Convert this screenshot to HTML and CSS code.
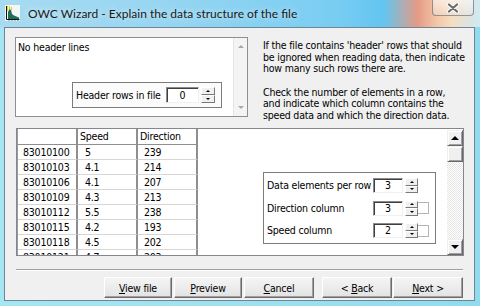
FILE: index.html
```html
<!DOCTYPE html>
<html>
<head>
<meta charset="utf-8">
<title>OWC Wizard</title>
<link rel="stylesheet" href="styles.css">
</head>
<body>
<div class="window">
  <div class="titlebar">
    <svg class="app-icon" width="15" height="16" viewBox="0 0 15 16">
      <rect x="0" y="0" width="15" height="16" fill="#f4f8f4"/>
      <path d="M3 14 L3 7 L4.5 4 L6 5 L7 9 L9 10.5 L11.5 11.5 L14 12.5 L14 14 Z" fill="#1f6e5c"/>
      <path d="M2.5 1 V6 M4.5 1 V4 M6.5 2 V5" stroke="#e8d21c" stroke-width="1.2"/>
      <path d="M1.5 1 V14.5 H14.5" stroke="#111" stroke-width="1" fill="none"/>
      <path d="M4 15.5 V14.5 M7 15.5 V14.5 M10 15.5 V14.5 M13 15.5 V14.5" stroke="#111" stroke-width="1"/>
    </svg>
    <span class="title">OWC Wizard - Explain the data structure of the file</span>
    <div class="close">
      <svg width="12" height="10" viewBox="0 0 12 10">
        <path d="M2 1.5 L10 8.5 M10 1.5 L2 8.5" stroke="#ffffff" stroke-width="4" stroke-linecap="round"/>
        <path d="M2 1.5 L10 8.5 M10 1.5 L2 8.5" stroke="#6a6a6a" stroke-width="2.2" stroke-linecap="round"/>
      </svg>
    </div>
  </div>
  <div class="client">
    <div class="top">
      <div class="listbox">
        <div class="list-text">No header lines</div>
        <div class="vscroll-light">
          <span class="dis-arrow dis-up"></span>
          <span class="dis-arrow dis-down"></span>
        </div>
        <div class="group header-group">
          <span class="label">Header rows in file</span>
          <div class="edit edit-wide">0</div>
          <div class="spin"><span class="spin-btn"><i class="tri tri-up"></i></span><span class="spin-btn"><i class="tri tri-down"></i></span></div>
        </div>
      </div>
      <div class="help">
        <p>If the file contains 'header' rows that should<br>be ignored when reading data, then indicate<br>how many such rows there are.</p>
        <p>Check the number of elements in a row,<br>and indicate which column contains the<br>speed data and which the direction data.</p>
      </div>
    </div>

    <div class="data-panel">
      <div class="grid-area">
        <div class="grid">
          <div class="cell hdr c1"></div><div class="cell hdr c2">Speed</div><div class="cell hdr c3">Direction</div>
          <div class="cell c1">83010100</div><div class="cell c2">5</div><div class="cell c3">239</div>
          <div class="cell c1">83010103</div><div class="cell c2">4.1</div><div class="cell c3">214</div>
          <div class="cell c1">83010106</div><div class="cell c2">4.1</div><div class="cell c3">207</div>
          <div class="cell c1">83010109</div><div class="cell c2">4.3</div><div class="cell c3">213</div>
          <div class="cell c1">83010112</div><div class="cell c2">5.5</div><div class="cell c3">238</div>
          <div class="cell c1">83010115</div><div class="cell c2">4.2</div><div class="cell c3">193</div>
          <div class="cell c1">83010118</div><div class="cell c2">4.5</div><div class="cell c3">202</div>
          <div class="cell c1 last">83010121</div><div class="cell c2 last">4.7</div><div class="cell c3 last">203</div>
        </div>
      </div>
      <div class="vscroll">
        <span class="sb-btn"><i class="sb-tri sb-up"></i></span>
        <span class="sb-thumb"></span>
        <span class="sb-track"></span>
        <span class="sb-btn"><i class="sb-tri sb-down"></i></span>
      </div>
      <div class="group fields">
        <span class="label">Data elements per row</span>
        <div class="edit">3</div>
        <div class="spin"><span class="spin-btn"><i class="tri tri-up"></i></span><span class="spin-btn"><i class="tri tri-down"></i></span></div>
        <span class="stub none"></span>

        <span class="label">Direction column</span>
        <div class="edit">3</div>
        <div class="spin"><span class="spin-btn"><i class="tri tri-up"></i></span><span class="spin-btn"><i class="tri tri-down"></i></span></div>
        <span class="stub"></span>

        <span class="label">Speed column</span>
        <div class="edit">2</div>
        <div class="spin"><span class="spin-btn"><i class="tri tri-up"></i></span><span class="spin-btn"><i class="tri tri-down"></i></span></div>
        <span class="stub"></span>
      </div>
    </div>

    <div class="separator"></div>

    <div class="buttons">
      <button class="btn b-view"><u>V</u>iew file</button>
      <button class="btn b-preview"><u>P</u>review</button>
      <button class="btn b-cancel"><u>C</u>ancel</button>
      <button class="btn b-back">&lt; <u>B</u>ack</button>
      <button class="btn b-next"><u>N</u>ext &gt;</button>
    </div>
  </div>
</div>
</body>
</html>
```

FILE: styles.css
```css
* { box-sizing: border-box; }
html, body { margin: 0; padding: 0; }
body {
  width: 480px;
  height: 306px;
  overflow: hidden;
  font-family: "DejaVu Sans Condensed", "DejaVu Sans", "Liberation Sans", sans-serif;
  font-stretch: condensed;
  font-size: 10.5px;
  letter-spacing: -0.2px;
  color: #000;
}

.window {
  width: 480px;
  height: 306px;
  display: flex;
  flex-direction: column;
  background: linear-gradient(90deg, #a6e6f3 0%, #9fe0f0 50%, #8fdcef 100%);
}

.titlebar {
  height: 27px;
  flex: none;
  display: flex;
  align-items: center;
  padding-left: 5px;
  background: linear-gradient(90deg, #a7dbf1 0%, #96d5f1 35%, #79cdf2 70%, #62c5f0 80%, #e59a85 87%, #f2c7a8 91%, #f6dcc0 94%, #cfe9f3 100%);
}

.app-icon { flex: none; margin-right: 8px; margin-top: -1px; }

.title {
  font-family: Lato, "Liberation Sans", sans-serif;
  font-stretch: normal;
  font-size: 12px;
  letter-spacing: 0;
  color: #1a1a1a;
  text-shadow: 0 0 6px rgba(255,255,255,0.8);
  margin-top: -1px;
  white-space: nowrap;
}

.close {
  margin-left: auto;
  margin-right: 6px;
  align-self: flex-start;
  width: 42px;
  height: 16px;
  border: 1px solid rgba(70,70,90,0.55);
  border-top: none;
  border-radius: 0 0 4px 4px;
  background: linear-gradient(180deg, rgba(255,255,255,0.55), rgba(240,230,220,0.35));
  display: flex;
  align-items: center;
  justify-content: center;
}

.client {
  flex: 1;
  margin: 0 5px 5px 4px;
  border: 1px solid #6d8594;
  background: #f0f0f0;
  padding: 9px 10px 0 10px;
  display: flex;
  flex-direction: column;
}

/* top section */
.top { display: flex; height: 80px; flex: none; }

.listbox {
  position: relative;
  flex: none;
  width: 233px;
  height: 80px;
  border: 1px solid #8e8f8f;
  background: #fff;
  display: flex;
}
.list-text { flex: 1; padding: 3px 0 0 2px; white-space: nowrap; }

.vscroll-light {
  width: 14px;
  border-left: 1px solid #e6e6e6;
  background: #f4f4f4;
  display: flex;
  flex-direction: column;
  justify-content: space-between;
  align-items: center;
  padding: 7px 0 7px 0;
}
.dis-arrow { width: 0; height: 0; border-left: 3px solid transparent; border-right: 3px solid transparent; }
.dis-up { border-bottom: 3px solid #a8a8a8; }
.dis-down { border-top: 3px solid #a8a8a8; }

.group {
  position: absolute;
  border: 1px solid #7c7c7c;
  background: #fbfbfb;
}
.label { white-space: nowrap; }
.header-group {
  left: 56px;
  top: 44px;
  width: 150px;
  height: 26px;
  display: flex;
  align-items: center;
  padding-left: 3px;
}
.header-group .label { width: 90px; }

.edit {
  width: 30px;
  height: 15px;
  background: #fff;
  border: 1px solid;
  border-color: #8a8a8a #f0f0f0 #f0f0f0 #8a8a8a;
  box-shadow: inset 1px 1px 0 #3f3f3f;
  text-align: center;
  line-height: 13px;
}
.edit-wide { width: 33px; height: 16px; line-height: 14px; }

.spin {
  width: 13px;
  height: 15px;
  margin-left: 2px;
  display: flex;
  flex-direction: column;
}
.header-group .spin { width: 14px; height: 16px; }
.spin-btn {
  flex: 1;
  background: #f0f0f0;
  border: 1px solid;
  border-color: #fff #7a7a7a #7a7a7a #fff;
  display: flex;
  align-items: center;
  justify-content: center;
}
.tri { width: 0; height: 0; border-left: 2px solid transparent; border-right: 2px solid transparent; }
.tri-up { border-bottom: 2px solid #000; }
.tri-down { border-top: 2px solid #000; }

.help { margin-left: 15px; padding-top: 3px; line-height: 11.5px; white-space: nowrap; }
.help p { margin: 0; }
.help p + p { margin-top: 12px; }

/* data panel */
.data-panel {
  position: relative;
  margin-top: 11px;
  margin-left: 1px;
  width: 448px;
  height: 128px;
  flex: none;
  border: 1px solid #828790;
  background: #fff;
  display: flex;
}
.grid-area { flex: 1; overflow: hidden; }
.grid {
  display: grid;
  grid-template-columns: 60px 60px 60px;
  grid-template-rows: 16px repeat(7, 15px) 40px;
  width: 181px;
  border-left: 1px solid #9a9a9a;
}
.cell {
  border-right: 2px solid #8f8f8f;
  border-bottom: 1px solid #d6d6d6;
  white-space: nowrap;
  line-height: 14px;
}
.cell.hdr { border-bottom: 1px solid #8f8f8f; line-height: 15px; padding-left: 2px; }
.c1 { padding-left: 5px; }
.c2 { padding-left: 7px; }
.c3 { padding-left: 6px; }
.cell.last { border-bottom: none; }

.vscroll {
  width: 16px;
  flex: none;
  display: flex;
  flex-direction: column;
  padding-top: 1px;
}
.sb-btn, .sb-thumb {
  height: 16px;
  flex: none;
  background: #f0f0f0;
  border: 1px solid;
  border-color: #f0f0f0 #696969 #696969 #f0f0f0;
  box-shadow: inset 1px 1px 0 #fff, inset -1px -1px 0 #a0a0a0;
  display: flex;
  align-items: center;
  justify-content: center;
}
.sb-track {
  flex: 1;
  background: repeating-conic-gradient(#e6e6e6 0 25%, #ffffff 0 50%) 0 0 / 2px 2px;
}
.sb-tri { width: 0; height: 0; border-left: 4px solid transparent; border-right: 4px solid transparent; }
.sb-up { border-bottom: 4px solid #000; }
.sb-down { border-top: 4px solid #000; }

.fields {
  left: 246px;
  top: 43px;
  width: 173px;
  height: 72px;
  background: #fff;
  display: grid;
  grid-template-columns: 106px 30px 15px 11px;
  grid-auto-rows: 15px;
  row-gap: 7.5px;
  align-items: center;
  padding: 5px 0 0 3px;
}
.fields .label { line-height: 15px; }
.fields .spin { margin-left: 2px; }
.stub {
  height: 12px;
  border: 1px solid #b5b5b5;
  border-left: none;
  background: #fff;
}
.stub.none { border: none; }

.separator {
  margin-top: 13px;
  margin-left: 1px;
  width: 447px;
  height: 2px;
  border-top: 1px solid #a0a0a0;
  border-bottom: 1px solid #fff;
  flex: none;
}

.buttons {
  margin-top: 6px;
  display: flex;
  justify-content: flex-end;
  padding-right: 1px;
}
.btn {
  height: 21px;
  width: 70px;
  font-family: inherit;
  font-stretch: condensed;
  font-size: 10.5px;
  letter-spacing: -0.2px;
  color: #000;
  padding: 0;
  border: 1px solid;
  border-color: #fff #6b6b6b #6b6b6b #fff;
  box-shadow: inset -1px -1px 0 #a0a0a0;
  background: linear-gradient(180deg, #f4f4f4 0%, #ececec 50%, #e2e2e2 100%);
}
.b-view { width: 68px; margin-right: 2px; }
.b-preview { width: 68px; margin-right: 2px; }
.b-cancel { margin-right: 8px; }
.b-back { margin-right: 1px; }
```
